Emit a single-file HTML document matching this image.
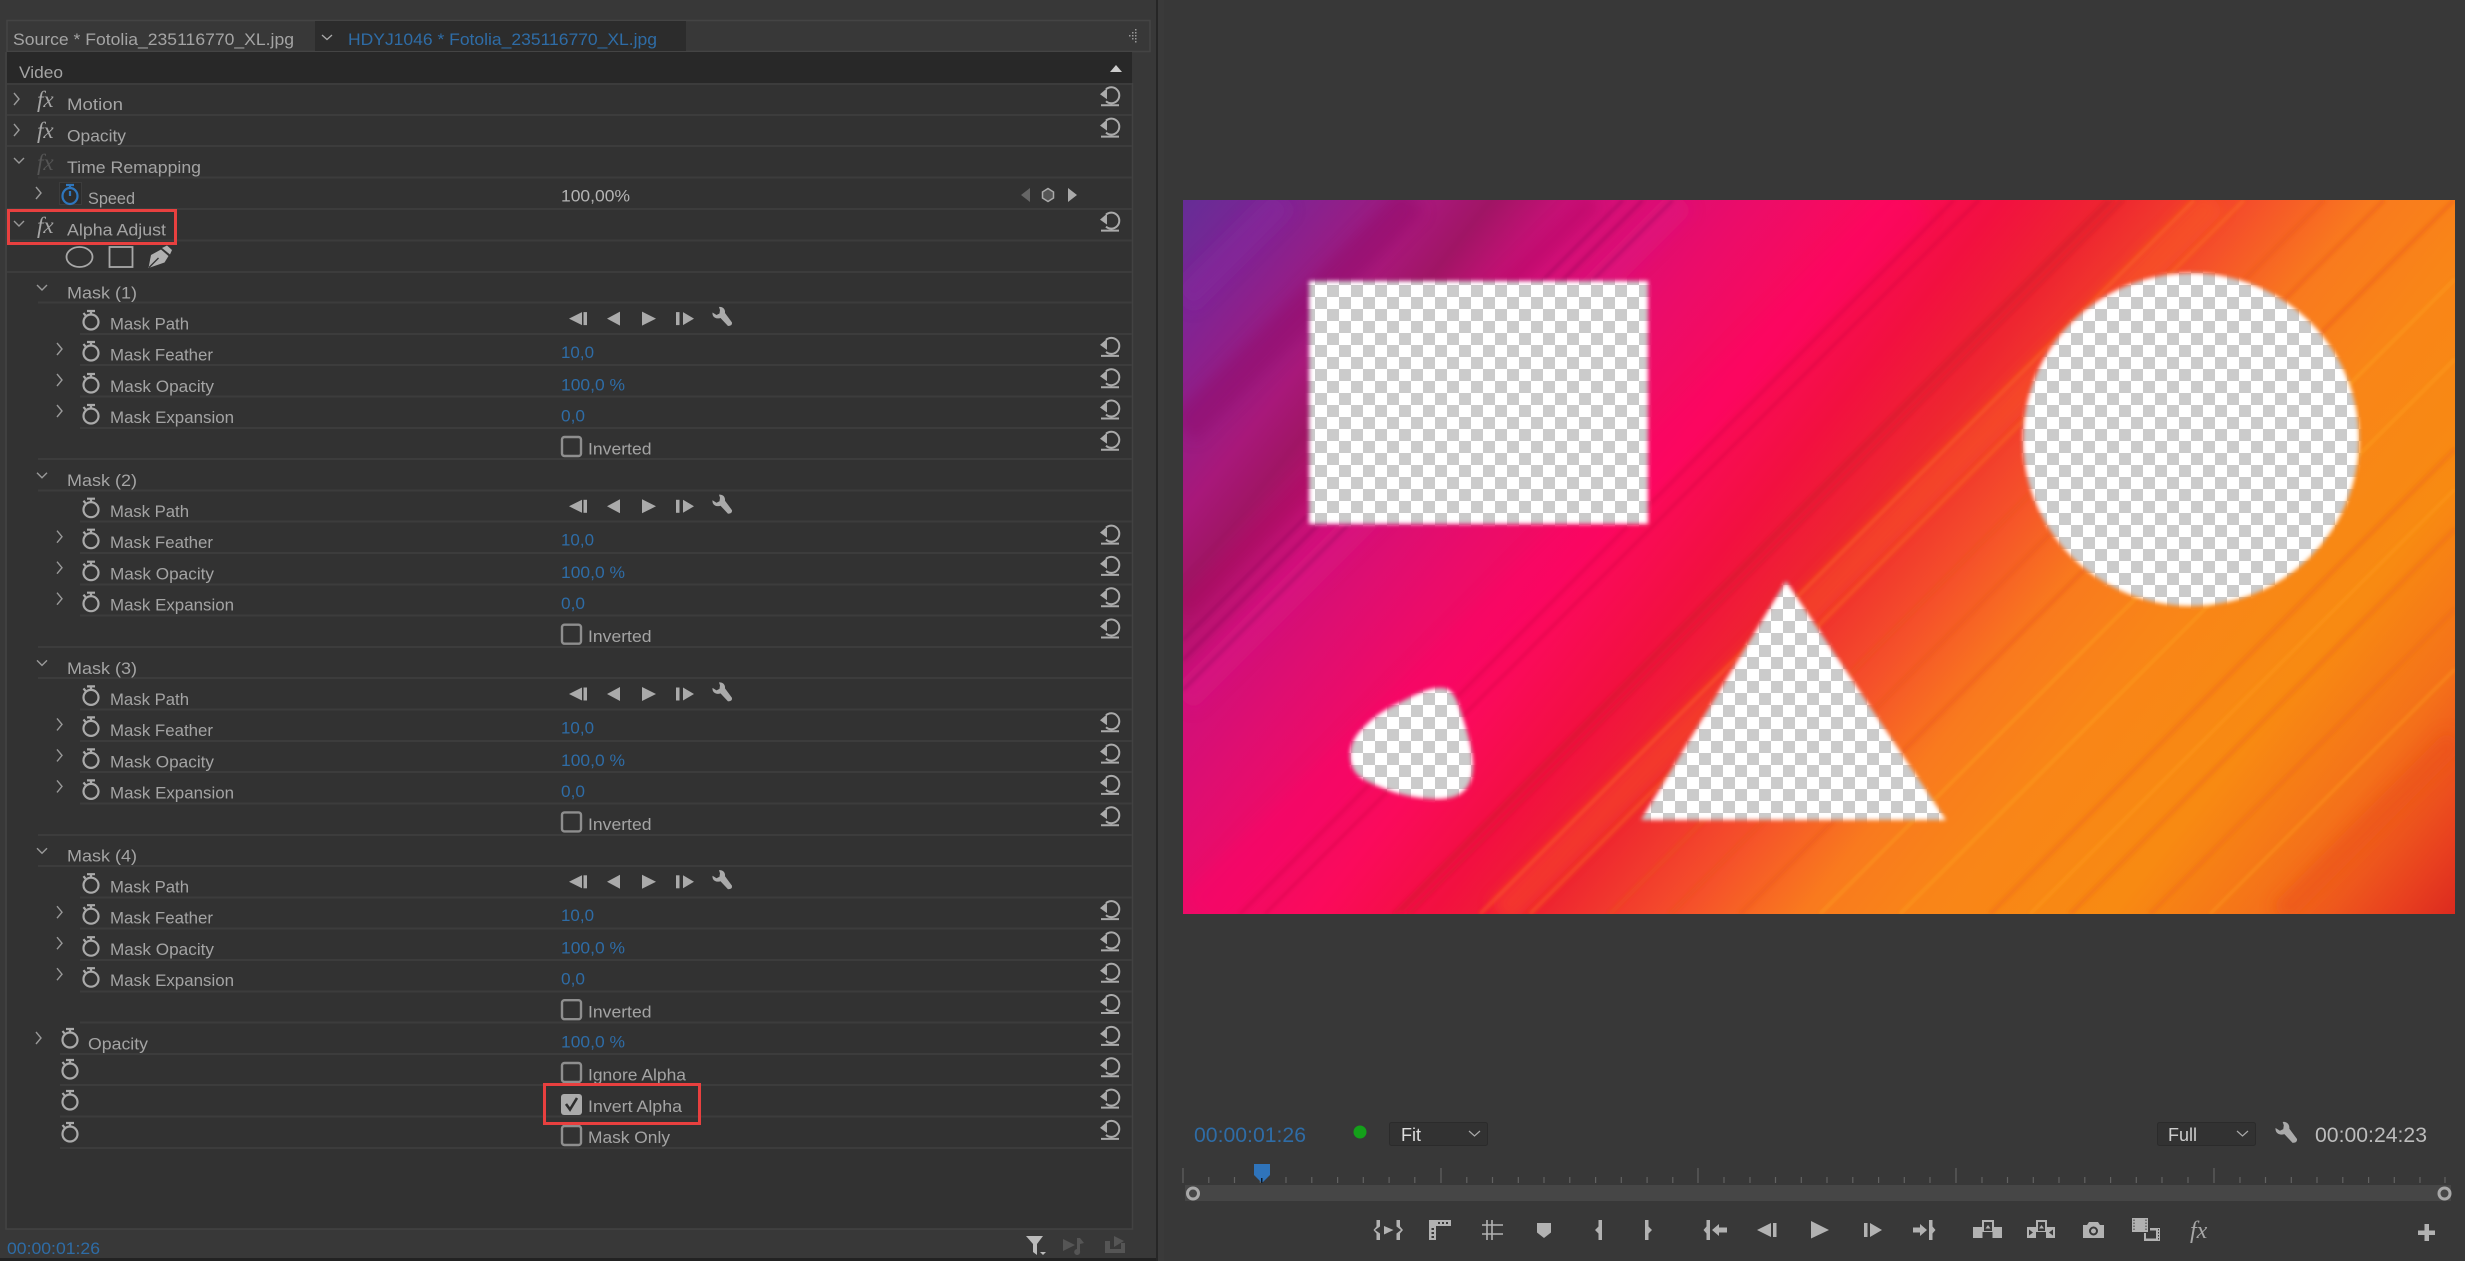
<!DOCTYPE html>
<html><head><meta charset="utf-8"><title>Alpha Adjust</title>
<style>
html,body{margin:0;padding:0;background:#383838;width:2465px;height:1261px;overflow:hidden}
svg{display:block}
text{font-family:"Liberation Sans",sans-serif;font-size:17px;fill:#a4a4a4}
.b{fill:#2e6ca6}
.fx{font-family:"Liberation Serif",serif;font-style:italic;font-size:23px;fill:#a6a6a6}
.ln{stroke:#3c3c3c;stroke-width:2}
</style></head><body>
<svg width="2465" height="1261" viewBox="0 0 2465 1261" xmlns="http://www.w3.org/2000/svg">
<defs>
<g id="sw" fill="none" stroke="#aaa" stroke-width="2.2"><ellipse cx="0" cy="0" rx="7.5" ry="7.5"/><path d="M-4 -11H4M0 -11V-7M-5.5 -6.5L-7.5 -9"/></g>
<g id="swb" fill="none" stroke="#2e76bd" stroke-width="2.2"><ellipse cx="0" cy="0" rx="7.5" ry="8"/><path d="M-4 -11H4M0 -11V-7M0 -5V0"/></g>
<g id="rs"><path d="M6 -25A8 8 0 1 1 6 -13M1 -9H19" fill="none" stroke="#aaa" stroke-width="2"/><path d="M0 -20L7 -26V-15Z" fill="#aaa"/></g>
<path id="cr" d="M0 -6L5 0L0 6" fill="none" stroke="#999" stroke-width="1.4"/>
<path id="cd" d="M-5 -3L0 2L5 -3" fill="none" stroke="#999" stroke-width="1.4"/>
<path id="wr" d="M7 0C10 -.5 13.5 1.5 13 6L20 15.5Q20.5 19 16 19L8.5 11C4 12.5 0 10 .5 5.5L4.5 8L7.5 6.5L8 3Z" fill="#aaa"/>
<g id="kb" fill="#aaa"><path d="M569 -15L582 -21.500V-8.500Z"/><rect x="583.500" y="-21.500" width="3.500" height="13"/><path d="M607 -15L620 -22V-8Z"/><path d="M642 -22L656 -15L642 -8Z"/><rect x="676" y="-21.500" width="3.500" height="13"/><path d="M683 -21.500L694 -15L683 -8.500Z"/></g>
<rect id="cb" x="0" y="0" width="19" height="19" rx="2.500" fill="none" stroke="#8e8e8e" stroke-width="2.400"/>
<pattern id="chk" patternUnits="userSpaceOnUse" x="1315" y="285" width="24" height="24"><rect width="24" height="24" fill="#fff"/><rect x="12" width="12" height="12" fill="#cbcbcb"/><rect y="12" width="12" height="12" fill="#cbcbcb"/></pattern>
<linearGradient id="bg" gradientUnits="userSpaceOnUse" x1="1183" y1="200" x2="2307" y2="1099">
<stop offset="0" stop-color="#652d96"/><stop offset=".054" stop-color="#7f2494"/><stop offset=".136" stop-color="#a8187a"/><stop offset=".168" stop-color="#a01565"/><stop offset=".217" stop-color="#cf107a"/><stop offset=".304" stop-color="#ea0c6a"/><stop offset=".38" stop-color="#fb0a5c"/><stop offset=".445" stop-color="#f21040"/><stop offset=".505" stop-color="#ee2630"/><stop offset=".583" stop-color="#f5512a"/><stop offset=".646" stop-color="#f97a1e"/><stop offset=".711" stop-color="#f98518"/><stop offset=".814" stop-color="#f88a12"/><stop offset=".895" stop-color="#f4701a"/><stop offset=".966" stop-color="#e8401f"/><stop offset="1" stop-color="#dc2a1f"/>
</linearGradient>
<filter id="bl6" x="-20%" y="-20%" width="140%" height="140%"><feGaussianBlur stdDeviation="7"/></filter>
<filter id="bl2" x="-20%" y="-20%" width="140%" height="140%"><feGaussianBlur stdDeviation="1.600"/></filter>
<filter id="bl1" x="-10%" y="-10%" width="120%" height="120%"><feGaussianBlur stdDeviation="2"/></filter>
<clipPath id="imgc"><rect x="1183" y="200" width="1272" height="714"/></clipPath>
<mask id="holes" maskUnits="userSpaceOnUse" x="1183" y="200" width="1272" height="714"><g fill="#fff" filter="url(#bl1)"><rect x="1309" y="281" width="339" height="243"/><ellipse cx="2191" cy="439.500" rx="168" ry="166.500"/><path d="M1786 581L1946 820H1641Z"/><path d="M1442 688C1452 688 1456 698 1460 709C1466 728 1473 748 1473 766C1473 782 1466 792 1456 796C1448 799 1440 799 1434 799C1416 798 1400 795 1385 789C1370 783 1356 778 1352 766C1349 758 1350 750 1352 744C1356 734 1362 729 1368 723C1380 712 1392 706 1401 702C1416 694 1430 687 1442 688Z"/></g></mask>
</defs>

<!-- panel base -->
<rect width="2465" height="1261" fill="#383838"/>
<rect x="0" y="1258" width="1157" height="3" fill="#222"/>
<rect x="1156" y="0" width="2" height="1261" fill="#262626"/>
<rect x="1158" y="0" width="6" height="1261" fill="#3a3a3a"/>

<!-- tabs -->
<rect x="7" y="20.500" width="1143" height="31" fill="#383838" stroke="#444" stroke-width="1.500"/>
<rect x="315" y="21" width="371" height="30" fill="#2c2c2c"/>
<text x="13" y="45" textLength="281" lengthAdjust="spacingAndGlyphs">Source * Fotolia_235116770_XL.jpg</text>
<path d="M322 35L327 39.500L332 35" fill="none" stroke="#aaa" stroke-width="1.300"/>
<text x="348" y="45" class="b" textLength="309" lengthAdjust="spacingAndGlyphs">HDYJ1046 * Fotolia_235116770_XL.jpg</text>
<g fill="#999"><rect x="1135" y="29" width="1.500" height="1.500"/><rect x="1135" y="32" width="1.500" height="1.500"/><rect x="1132" y="32" width="1.500" height="1.500"/><rect x="1135" y="35" width="1.500" height="1.500"/><rect x="1132" y="35" width="1.500" height="1.500"/><rect x="1129" y="35" width="1.500" height="1.500"/><rect x="1135" y="38" width="1.500" height="1.500"/><rect x="1132" y="38" width="1.500" height="1.500"/><rect x="1135" y="41" width="1.500" height="1.500"/></g>

<!-- effects table -->
<rect x="7" y="52" width="1125" height="1177" fill="#323232"/>
<rect x="7" y="52" width="1125" height="31" fill="#282828"/>
<path d="M6 52V1229H1132.500V83" fill="none" stroke="#424242" stroke-width="1.500"/>
<text x="19" y="78" textLength="44" lengthAdjust="spacingAndGlyphs">Video</text>
<path d="M1110 72L1116 65L1122 72Z" fill="#ccc"/>

<g class="ln">
<path class="ln" d="M7 84H1132M7 115H1132M7 146H1132M38 177.500H1132M7 209H1132M7 240.500H1132M7 272H1132M38 302.500H1132"/>
<path class="ln" d="M80 334H1132M80 365H1132M80 396.500H1132M80 428H1132M38 459H1132M38 490.500H1132M80 521.500H1132M80 553H1132M80 584.500H1132M80 615.500H1132M38 647H1132M38 678H1132M80 709.500H1132M80 741H1132M80 772H1132M80 803.500H1132M38 835H1132M38 866H1132M80 897.500H1132M80 928.500H1132M80 960H1132M80 991.500H1132M80 1022.500H1132M60 1054H1132M60 1085H1132M60 1116.500H1132M60 1148H1132"/>
</g>

<!-- top rows -->
<use href="#cr" x="14" y="99"/><text class="fx" x="37" y="107">fx</text><text x="67" y="110" textLength="56" lengthAdjust="spacingAndGlyphs">Motion</text><use href="#rs" x="1100" y="114.300"/>
<use href="#cr" x="14" y="130"/><text class="fx" x="37" y="138">fx</text><text x="67" y="141.500" textLength="59" lengthAdjust="spacingAndGlyphs">Opacity</text><use href="#rs" x="1100" y="145.600"/>
<use href="#cd" x="19" y="161"/><text class="fx" x="37" y="170" style="fill:#555">fx</text><text x="67" y="173" textLength="134" lengthAdjust="spacingAndGlyphs">Time Remapping</text>
<use href="#cr" x="36" y="193"/><rect x="59.500" y="182.500" width="22" height="22" fill="#2c2c2c" stroke="#3c3c3c"/><use href="#swb" x="70" y="196"/><text x="88" y="204" textLength="47" lengthAdjust="spacingAndGlyphs">Speed</text>
<text x="561" y="201.500" style="fill:#b4b4b4" textLength="69" lengthAdjust="spacingAndGlyphs">100,00%</text>
<path d="M1021 195L1030 188V202Z" fill="#666"/><path d="M1048 188.500L1053.500 192V198L1048 201.500L1042.500 198V192Z" fill="#555" stroke="#aaa" stroke-width="1.500"/><path d="M1068 188L1077 195L1068 202Z" fill="#aaa"/>
<use href="#cd" x="19" y="224"/><text class="fx" x="37" y="233">fx</text><text x="67" y="235.500" textLength="99" lengthAdjust="spacingAndGlyphs">Alpha Adjust</text><use href="#rs" x="1100" y="239.600"/>
<ellipse cx="79.500" cy="257" rx="13" ry="10" fill="none" stroke="#a8a8a8" stroke-width="1.800"/>
<rect x="109.500" y="247" width="23" height="20" fill="none" stroke="#a8a8a8" stroke-width="1.800"/>
<path d="M148.500 268L151 255L161 249.500L168.500 256L164.500 262.500Z" fill="#b0b0b0"/><path d="M162 248L167 245.500L172 250L170 254.500Z" fill="#b0b0b0"/><path d="M149 267.500L158.500 258" stroke="#323232" stroke-width="1.300" fill="none"/>

<!-- mask blocks -->
<g>
<use href="#cd" x="42" y="288"/><text x="67" y="298.500" textLength="70" lengthAdjust="spacingAndGlyphs">Mask (1)</text>
<use href="#sw" x="91" y="322"/><text x="110" y="329.500" textLength="79" lengthAdjust="spacingAndGlyphs">Mask Path</text><use href="#kb" x="0" y="333.600"/><use href="#wr" x="712" y="307"/>
<use href="#cr" x="57" y="349"/><use href="#sw" x="91" y="353"/><text x="110" y="360.500" textLength="103" lengthAdjust="spacingAndGlyphs">Mask Feather</text><text class="b" x="561" y="358" textLength="33" lengthAdjust="spacingAndGlyphs">10,0</text><use href="#rs" x="1100" y="364.900"/>
<use href="#cr" x="57" y="380"/><use href="#sw" x="91" y="385"/><text x="110" y="392" textLength="104" lengthAdjust="spacingAndGlyphs">Mask Opacity</text><text class="b" x="561" y="390.500" textLength="64" lengthAdjust="spacingAndGlyphs">100,0 %</text><use href="#rs" x="1100" y="396.200"/>
<use href="#cr" x="57" y="411"/><use href="#sw" x="91" y="416"/><text x="110" y="423" textLength="124" lengthAdjust="spacingAndGlyphs">Mask Expansion</text><text class="b" x="561" y="421.500" textLength="24" lengthAdjust="spacingAndGlyphs">0,0</text><use href="#rs" x="1100" y="427.500"/>
<use href="#cb" x="562" y="437"/><text x="588" y="454.500" textLength="63.500" lengthAdjust="spacingAndGlyphs">Inverted</text><use href="#rs" x="1100" y="458.800"/>
</g>
<g transform="translate(0,187.700)">
<use href="#cd" x="42" y="288"/><text x="67" y="298.500" textLength="70" lengthAdjust="spacingAndGlyphs">Mask (2)</text>
<use href="#sw" x="91" y="322"/><text x="110" y="329.500" textLength="79" lengthAdjust="spacingAndGlyphs">Mask Path</text><use href="#kb" x="0" y="333.600"/><use href="#wr" x="712" y="307"/>
<use href="#cr" x="57" y="349"/><use href="#sw" x="91" y="353"/><text x="110" y="360.500" textLength="103" lengthAdjust="spacingAndGlyphs">Mask Feather</text><text class="b" x="561" y="358" textLength="33" lengthAdjust="spacingAndGlyphs">10,0</text><use href="#rs" x="1100" y="364.900"/>
<use href="#cr" x="57" y="380"/><use href="#sw" x="91" y="385"/><text x="110" y="392" textLength="104" lengthAdjust="spacingAndGlyphs">Mask Opacity</text><text class="b" x="561" y="390.500" textLength="64" lengthAdjust="spacingAndGlyphs">100,0 %</text><use href="#rs" x="1100" y="396.200"/>
<use href="#cr" x="57" y="411"/><use href="#sw" x="91" y="416"/><text x="110" y="423" textLength="124" lengthAdjust="spacingAndGlyphs">Mask Expansion</text><text class="b" x="561" y="421.500" textLength="24" lengthAdjust="spacingAndGlyphs">0,0</text><use href="#rs" x="1100" y="427.500"/>
<use href="#cb" x="562" y="437"/><text x="588" y="454.500" textLength="63.500" lengthAdjust="spacingAndGlyphs">Inverted</text><use href="#rs" x="1100" y="458.800"/>
</g>
<g transform="translate(0,375.400)">
<use href="#cd" x="42" y="288"/><text x="67" y="298.500" textLength="70" lengthAdjust="spacingAndGlyphs">Mask (3)</text>
<use href="#sw" x="91" y="322"/><text x="110" y="329.500" textLength="79" lengthAdjust="spacingAndGlyphs">Mask Path</text><use href="#kb" x="0" y="333.600"/><use href="#wr" x="712" y="307"/>
<use href="#cr" x="57" y="349"/><use href="#sw" x="91" y="353"/><text x="110" y="360.500" textLength="103" lengthAdjust="spacingAndGlyphs">Mask Feather</text><text class="b" x="561" y="358" textLength="33" lengthAdjust="spacingAndGlyphs">10,0</text><use href="#rs" x="1100" y="364.900"/>
<use href="#cr" x="57" y="380"/><use href="#sw" x="91" y="385"/><text x="110" y="392" textLength="104" lengthAdjust="spacingAndGlyphs">Mask Opacity</text><text class="b" x="561" y="390.500" textLength="64" lengthAdjust="spacingAndGlyphs">100,0 %</text><use href="#rs" x="1100" y="396.200"/>
<use href="#cr" x="57" y="411"/><use href="#sw" x="91" y="416"/><text x="110" y="423" textLength="124" lengthAdjust="spacingAndGlyphs">Mask Expansion</text><text class="b" x="561" y="421.500" textLength="24" lengthAdjust="spacingAndGlyphs">0,0</text><use href="#rs" x="1100" y="427.500"/>
<use href="#cb" x="562" y="437"/><text x="588" y="454.500" textLength="63.500" lengthAdjust="spacingAndGlyphs">Inverted</text><use href="#rs" x="1100" y="458.800"/>
</g>
<g transform="translate(0,563.200)">
<use href="#cd" x="42" y="288"/><text x="67" y="298.500" textLength="70" lengthAdjust="spacingAndGlyphs">Mask (4)</text>
<use href="#sw" x="91" y="322"/><text x="110" y="329.500" textLength="79" lengthAdjust="spacingAndGlyphs">Mask Path</text><use href="#kb" x="0" y="333.600"/><use href="#wr" x="712" y="307"/>
<use href="#cr" x="57" y="349"/><use href="#sw" x="91" y="353"/><text x="110" y="360.500" textLength="103" lengthAdjust="spacingAndGlyphs">Mask Feather</text><text class="b" x="561" y="358" textLength="33" lengthAdjust="spacingAndGlyphs">10,0</text><use href="#rs" x="1100" y="364.900"/>
<use href="#cr" x="57" y="380"/><use href="#sw" x="91" y="385"/><text x="110" y="392" textLength="104" lengthAdjust="spacingAndGlyphs">Mask Opacity</text><text class="b" x="561" y="390.500" textLength="64" lengthAdjust="spacingAndGlyphs">100,0 %</text><use href="#rs" x="1100" y="396.200"/>
<use href="#cr" x="57" y="411"/><use href="#sw" x="91" y="416"/><text x="110" y="423" textLength="124" lengthAdjust="spacingAndGlyphs">Mask Expansion</text><text class="b" x="561" y="421.500" textLength="24" lengthAdjust="spacingAndGlyphs">0,0</text><use href="#rs" x="1100" y="427.500"/>
<use href="#cb" x="562" y="437"/><text x="588" y="454.500" textLength="63.500" lengthAdjust="spacingAndGlyphs">Inverted</text><use href="#rs" x="1100" y="458.800"/>
</g>

<!-- bottom rows -->
<use href="#cr" x="36" y="1038"/><use href="#sw" x="70" y="1040"/><text x="88" y="1049.500" textLength="60" lengthAdjust="spacingAndGlyphs">Opacity</text><text class="b" x="561" y="1047.500" textLength="64" lengthAdjust="spacingAndGlyphs">100,0 %</text><use href="#rs" x="1100" y="1053.900"/>
<use href="#sw" x="70" y="1071"/><use href="#cb" x="562" y="1063"/><text x="588" y="1080.500" textLength="98" lengthAdjust="spacingAndGlyphs">Ignore Alpha</text><use href="#rs" x="1100" y="1085.200"/>
<use href="#sw" x="70" y="1102"/><rect x="561" y="1094" width="21" height="21" rx="3" fill="#aaa"/><path d="M566 1104L570 1109.500L577 1098" fill="none" stroke="#2d2d2d" stroke-width="2.600"/><text x="588" y="1112" textLength="94" lengthAdjust="spacingAndGlyphs">Invert Alpha</text><use href="#rs" x="1100" y="1116.600"/>
<use href="#sw" x="70" y="1134"/><use href="#cb" x="562" y="1126"/><text x="588" y="1143" textLength="82" lengthAdjust="spacingAndGlyphs">Mask Only</text><use href="#rs" x="1100" y="1147.900"/>

<!-- red highlights -->
<rect x="8.500" y="210.500" width="167" height="33" fill="none" stroke="#e8403f" stroke-width="3"/>
<rect x="544.500" y="1084.500" width="155" height="39" fill="none" stroke="#e8403f" stroke-width="3"/>

<!-- footer left -->
<text class="b" x="7" y="1254" textLength="93" lengthAdjust="spacingAndGlyphs">00:00:01:26</text>
<path d="M1026 1236H1043L1037 1244V1255L1033 1252V1244Z" fill="#bbb"/><path d="M1040 1252H1046L1043 1255Z" fill="#bbb"/>
<path d="M1063 1239L1075 1245L1063 1251ZM1077 1238H1080L1084 1243L1080 1244V1251A3 3 0 1 1 1077 1249Z" fill="#555"/>
<path d="M1105 1241H1110V1249H1121V1243H1125V1253H1105ZM1114 1236L1124 1241L1114 1247Z" fill="#555"/>

<!-- image -->
<rect x="1183" y="200" width="1272" height="714" fill="url(#bg)"/>
<g clip-path="url(#imgc)">
<g filter="url(#bl6)" fill="none">
<path d="M1183 300L1283 200" stroke="#8c2aa0" stroke-width="30" opacity=".35"/>
<path d="M1183 430L1413 200" stroke="#8a0f5c" stroke-width="34" opacity=".3"/>
<path d="M1183 610L1593 200" stroke="#a50f55" stroke-width="20" opacity=".3"/>
<path d="M1183 700L1683 200" stroke="#e0108a" stroke-width="30" opacity=".35"/>
<path d="M1200 914L1914 200" stroke="#ff0a68" stroke-width="50" opacity=".35"/>
<path d="M1500 914L2214 200" stroke="#ff6a20" stroke-width="30" opacity=".3"/>
<path d="M2280 914L2455 739" stroke="#e84a18" stroke-width="24" opacity=".4"/>
</g>
<g filter="url(#bl2)" fill="none">
<path d="M1183 660L1643 200M1183 640L1623 200M1183 690L1673 200" stroke="#7a0d4c" stroke-width="3" opacity=".3"/>
<path d="M1240 914L1954 200M1265 914L1979 200" stroke="#c00d3a" stroke-width="3" opacity=".3"/>
<path d="M1401 912L2113 200M1409 914L2123 200M1394 914L2108 200" stroke="#c81c2c" stroke-width="2.500" opacity=".55"/>
<path d="M1480 914L2194 200M1530 914L2244 200" stroke="#ff7a20" stroke-width="4" opacity=".35"/>
<path d="M1610 914L2324 200M1670 914L2384 200M1740 914L2454 200" stroke="#e8541a" stroke-width="4" opacity=".4"/>
<path d="M1820 914L2455 279M1900 914L2455 359" stroke="#ffa824" stroke-width="3" opacity=".45"/>
<path d="M1990 914L2455 449M2070 914L2455 529M2150 914L2455 609" stroke="#ee6a14" stroke-width="5" opacity=".4"/>
<path d="M2030 914L2455 489M2210 914L2455 669" stroke="#ffa01c" stroke-width="2.500" opacity=".55"/>
</g>
</g>
<rect x="1183" y="200" width="1272" height="714" fill="url(#chk)" mask="url(#holes)"/>

<!-- monitor bar -->
<text class="b" x="1194" y="1142" style="font-size:21px" textLength="112" lengthAdjust="spacingAndGlyphs">00:00:01:26</text>
<circle cx="1360" cy="1132" r="6.500" fill="#14a01a"/>
<rect x="1389.500" y="1122.500" width="98" height="23" rx="2" fill="#323232" stroke="#2b2b2b"/>
<text x="1401" y="1141" style="font-size:18px;fill:#ddd">Fit</text>
<path d="M1469 1131L1474.500 1136L1480 1131" fill="none" stroke="#aaa" stroke-width="1.200"/>
<rect x="2157.500" y="1122.500" width="98" height="23" rx="2" fill="#323232" stroke="#2b2b2b"/>
<text x="2168" y="1141" style="font-size:18px;fill:#ccc">Full</text>
<path d="M2237 1131L2242.500 1136L2248 1131" fill="none" stroke="#aaa" stroke-width="1.200"/>
<use href="#wr" transform="translate(2275,1122) scale(1.100)"/>
<text x="2315" y="1142" style="font-size:21px;fill:#bcbcbc" textLength="112" lengthAdjust="spacingAndGlyphs">00:00:24:23</text>

<!-- ruler -->
<path d="M1183 1168V1183M1208.800 1177V1183M1234.500 1177V1183M1260.300 1177V1183M1286 1177V1183M1311.800 1177V1183M1337.600 1177V1183M1363.300 1177V1183M1389.100 1177V1183M1414.800 1177V1183M1441 1168V1183M1466.800 1177V1183M1492.500 1177V1183M1518.300 1177V1183M1544 1177V1183M1569.800 1177V1183M1595.600 1177V1183M1621.300 1177V1183M1647.100 1177V1183M1672.800 1177V1183M1698 1168V1183M1724 1177V1183M1750 1177V1183M1775.500 1177V1183M1801.300 1177V1183M1827 1177V1183M1852.800 1177V1183M1878.600 1177V1183M1904.300 1177V1183M1930 1177V1183M1956 1168V1183M1982 1177V1183M2007.500 1177V1183M2033.300 1177V1183M2059 1177V1183M2084.800 1177V1183M2110.600 1177V1183M2136.300 1177V1183M2162 1177V1183M2188 1177V1183M2214 1168V1183M2240 1177V1183M2265.500 1177V1183M2291.300 1177V1183M2317 1177V1183M2342.800 1177V1183M2368.600 1177V1183M2394.300 1177V1183M2420 1177V1183M2445 1177V1183" stroke="#626262" stroke-width="1.200"/>
<rect x="1185" y="1185" width="1266" height="16" fill="#464646"/>
<circle cx="1193" cy="1193.500" r="5.500" fill="#464646" stroke="#a8a8a8" stroke-width="3"/>
<circle cx="2444.500" cy="1193.500" r="5.500" fill="#464646" stroke="#a8a8a8" stroke-width="3"/>
<path d="M1254 1164H1270V1175L1262 1183L1254 1175Z" fill="#2f74bb"/><rect x="1261" y="1178" width="1.500" height="5" fill="#0b1a2c"/>

<!-- transport -->
<g fill="#b2b2b2" stroke="none">
<path d="M1376.500 1220H1380V1226.500L1375 1230L1380 1233.500V1240H1376.500V1233.500L1373.500 1230L1376.500 1226.500Z"/>
<path d="M1384 1226L1393.500 1230L1384 1234.500Z"/>
<path d="M1396.500 1220H1400V1226.500L1403 1230L1400 1233.500V1240H1396.500V1233.500L1401 1230L1396.500 1226.500Z"/>
<path d="M1429 1220H1451V1226H1436V1240H1429Z"/>
<path d="M1438 1222H1440V1224H1438ZM1442 1222H1444V1224H1442ZM1446 1222H1448V1224H1446ZM1431.500 1228H1434V1230H1431.500ZM1431.500 1232H1434V1234H1431.500ZM1431.500 1236H1434V1238H1431.500Z" fill="#383838"/>
<path d="M1537 1223H1551V1232.500L1544 1238L1537 1232.500Z"/>
<path d="M1598.500 1220H1602V1226V1234V1240H1598.500V1233.500L1595 1230L1598.500 1226.500Z"/>
<path d="M1645 1220H1648.500V1226.500L1652 1230L1648.500 1233.500V1240H1645Z"/>
<path d="M1706.500 1220H1710V1240H1706.500V1233.500L1703.500 1230L1706.500 1226.500Z"/>
<path d="M1712 1230L1719 1224V1227.500H1727V1232.500H1719V1236Z"/>
<path d="M1757 1230L1771 1223V1237Z"/><rect x="1773" y="1223" width="3.500" height="14"/>
<path d="M1811 1221L1829 1230L1811 1238.500Z"/>
<rect x="1864" y="1223" width="3.500" height="14"/><path d="M1870 1223L1882 1230L1870 1237Z"/>
<path d="M1927 1230L1920 1224V1227.500H1913V1232.500H1920V1236Z"/>
<path d="M1929 1220H1932.500V1226.500L1935.500 1230L1932.500 1233.500V1240H1929Z"/>
</g>
<path d="M1482 1225H1503M1482 1234H1503M1487 1220V1240M1492 1220V1240" stroke="#b2b2b2" stroke-width="1.600" fill="none"/>
<!-- lift / extract -->
<g fill="#b2b2b2">
<path d="M1973 1227H1982V1220H1994V1227H2002V1238H1992.500V1232H1982.500V1238H1973Z"/><rect x="1984" y="1222" width="8" height="9" fill="#383838"/><path d="M1985.500 1228.500L1988 1225L1990.500 1228.500Z"/>
<path d="M2027 1227H2036V1220H2047V1227H2055V1238H2046V1232H2036V1238H2027Z"/><rect x="2038" y="1222" width="7" height="9" fill="#383838"/><path d="M2039 1228.500L2041.500 1225L2044 1228.500Z"/><path d="M2029 1229.500L2033 1232.500L2029 1235.500ZM2053 1229.500L2049 1232.500L2053 1235.500Z" fill="#383838"/>
<path d="M2083 1225H2087L2089 1222H2098L2100 1225H2104V1238H2083Z"/><circle cx="2093.500" cy="1231" r="3.500" fill="none" stroke="#383838" stroke-width="2"/>
<rect x="2132" y="1218" width="16" height="14"/><path d="M2134 1219.500V1231M2146 1219.500V1231" stroke="#383838" stroke-width="1" stroke-dasharray="1.500 1.500"/>
<path d="M2150 1228H2160V1241H2144V1233H2146V1238.500H2156V1230.500H2150Z"/><path d="M2158.500 1229V1241" stroke="#383838" stroke-width="1" stroke-dasharray="1.500 1.500"/>
<path d="M2418 1230.500H2424.500V1224H2429V1230.500H2435V1235H2429V1241H2424.500V1235H2418Z"/>
</g>
<text class="fx" x="2190" y="1238" style="font-size:24px">fx</text>
</svg>
</body></html>
